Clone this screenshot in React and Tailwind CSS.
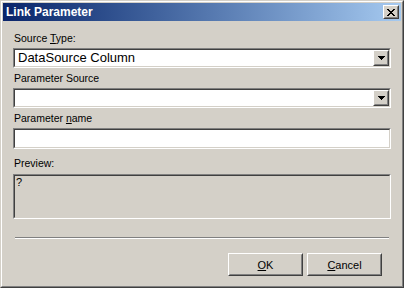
const FONT = "font-['Liberation_Sans',Arial,sans-serif]";

// classic 3d edges
function Sunken({ className = "", children }) {
  return (
    <div className={`border border-t-[#808080] border-l-[#808080] border-r-white border-b-white ${className}`}>
      <div className="h-full border border-t-[#404040] border-l-[#404040] border-r-[#d4d0c8] border-b-[#d4d0c8]">
        {children}
      </div>
    </div>
  );
}

function Raised({ className = "", innerClass = "", children }) {
  return (
    <div className={`border border-t-white border-l-white border-r-[#404040] border-b-[#404040] bg-[#d4d0c8] ${className}`}>
      <div className={`h-full border border-t-[#d4d0c8] border-l-[#d4d0c8] border-r-[#808080] border-b-[#808080] ${innerClass}`}>
        {children}
      </div>
    </div>
  );
}

function CloseGlyph() {
  const rows = ["XX....XX", ".XX..XX.", "..XXXX..", "...XX...", "..XXXX..", ".XX..XX.", "XX....XX"];
  return (
    <svg width="8" height="7" viewBox="0 0 8 7" shapeRendering="crispEdges">
      {rows.map((r, y) =>
        r.split("").map((c, x) => (c === "X" ? <rect key={`${x}-${y}`} x={x} y={y} width="1" height="1" fill="#000" /> : null))
      )}
    </svg>
  );
}

function Arrow() {
  return (
    <svg width="7" height="4" viewBox="0 0 7 4" shapeRendering="crispEdges">
      <rect x="0" y="0" width="7" height="1" fill="#000" />
      <rect x="1" y="1" width="5" height="1" fill="#000" />
      <rect x="2" y="2" width="3" height="1" fill="#000" />
      <rect x="3" y="3" width="1" height="1" fill="#000" />
    </svg>
  );
}

function Combo({ value }) {
  return (
    <Sunken className="h-[20px] bg-white">
      <div className="flex h-full">
        <div className="flex-1 pl-[3px] text-[13px] leading-[16px] text-black">{value}</div>
        <Raised className="w-[16px] h-[16px]" innerClass="flex items-center justify-center">
          <Arrow />
        </Raised>
      </div>
    </Sunken>
  );
}

function Label({ children, className = "" }) {
  return <div className={`pl-px h-[13px] text-[10.5px] leading-[13px] text-black ${className}`}>{children}</div>;
}

function Button({ children }) {
  return (
    <Raised className="w-[75px] h-[23px]" innerClass="flex items-center justify-center pt-px">
      <span className="text-[11px] text-black">{children}</span>
    </Raised>
  );
}

export default function App() {
  return (
    <div className={`w-[404px] h-[288px] ${FONT} border border-t-[#d4d0c8] border-l-[#d4d0c8] border-r-[#404040] border-b-[#404040] bg-[#d4d0c8] overflow-hidden`}>
      <div className="h-full border border-t-white border-l-white border-r-[#808080] border-b-[#808080] p-px flex flex-col">
        {/* title bar */}
        <div className="h-[18px] shrink-0 flex items-center justify-between pl-[3px] pr-[2px] bg-linear-to-r from-[#0a246a] to-[#a6caf0]">
          <span className="text-[12px] font-bold text-white leading-none">Link Parameter</span>
          <Raised className="w-[16px] h-[14px]" innerClass="flex items-center justify-center">
            <CloseGlyph />
          </Raised>
        </div>

        <div className="flex flex-col px-[10px]">
          <Label className="mt-[11px]">
            Source <span className="underline">T</span>ype:
          </Label>
          <div className="mt-[3px]">
            <Combo value="DataSource Column" />
          </div>

          <Label className="mt-[4px]">Parameter Source</Label>
          <div className="mt-[3px]">
            <Combo value="" />
          </div>

          <Label className="mt-[4px]">
            Parameter <span className="underline">n</span>ame
          </Label>
          <Sunken className="mt-[3px] h-[21px] bg-white" />

          <Label className="mt-[8px]">Preview:</Label>
          <Sunken className="mt-[4px] h-[45px] bg-[#d4d0c8]">
            <div className="pl-px text-[11px] leading-[12px] text-black">?</div>
          </Sunken>

          <div className="mt-[18px] mx-[2px] border-t border-t-[#808080] border-b border-b-white" />

          <div className="mt-[14px] mr-[9px] flex justify-end gap-[4px]">
            <Button>
              <span className="underline">O</span>K
            </Button>
            <Button>
              <span className="underline">C</span>ancel
            </Button>
          </div>
        </div>
      </div>
    </div>
  );
}
